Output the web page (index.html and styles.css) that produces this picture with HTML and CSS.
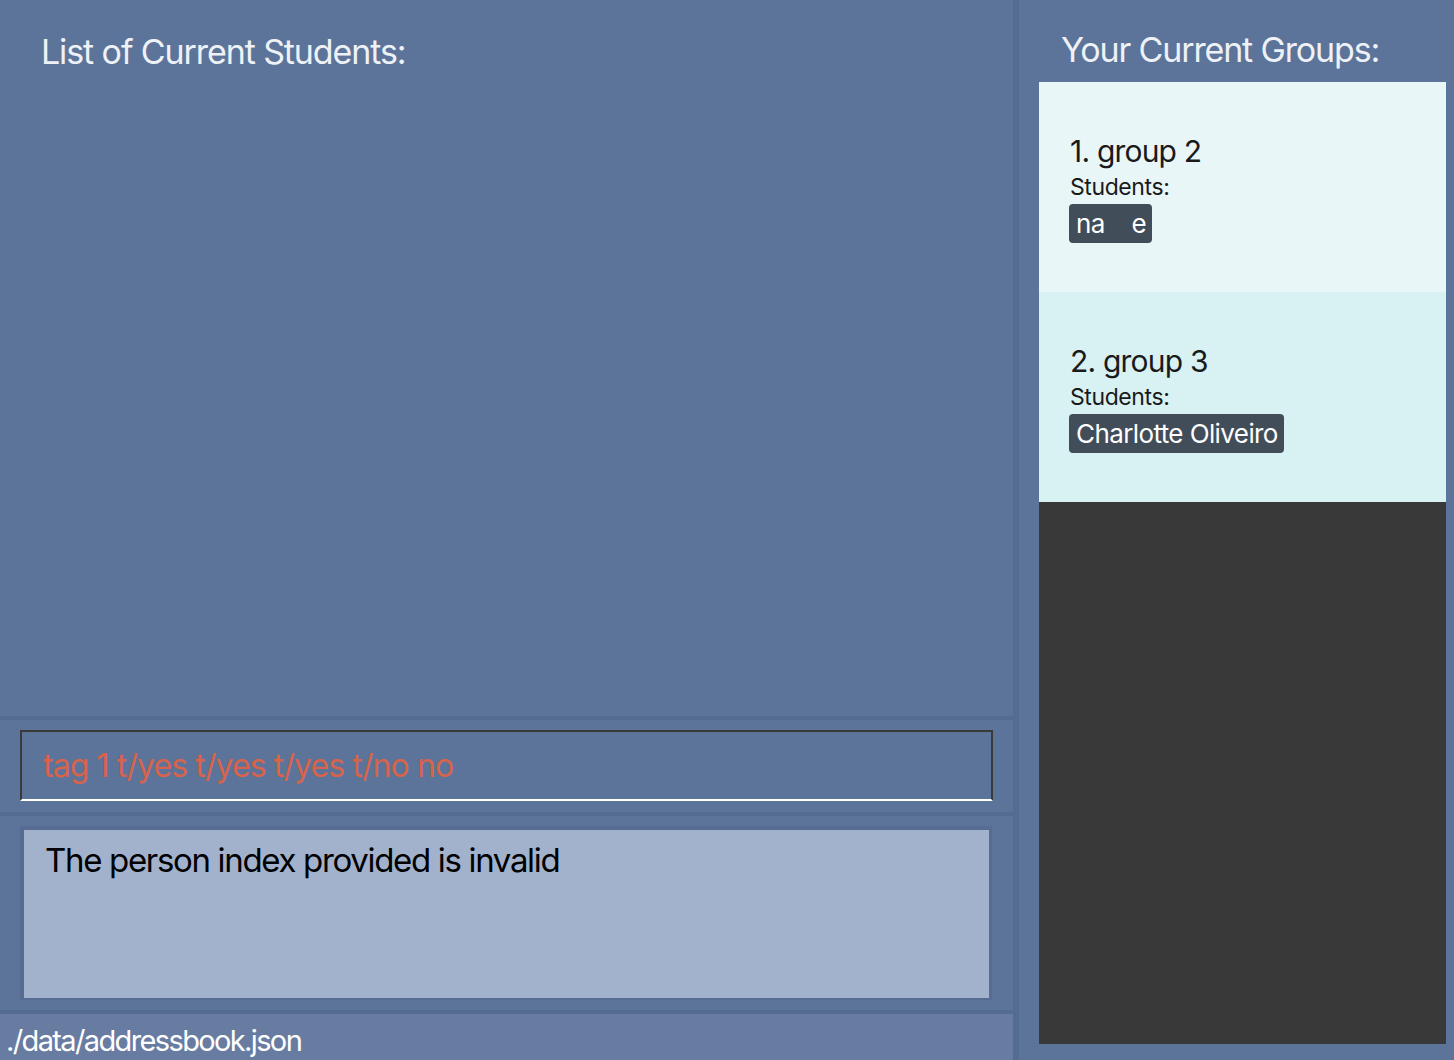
FILE: index.html
```html
<!DOCTYPE html>
<html>
<head>
<meta charset="utf-8">
<link rel="stylesheet" href="styles.css">
</head>
<body>
<div class="app">
  <div class="left">
    <section class="students">
      <h1 class="title">List of Current Students:</h1>
    </section>
    <section class="command">
      <div class="command-box">tag 1 t/yes t/yes t/yes t/no no</div>
    </section>
    <section class="result">
      <div class="result-box">The person index provided is invalid</div>
    </section>
    <footer class="status">./data/addressbook.json</footer>
  </div>
  <div class="divider"></div>
  <div class="right">
    <h2 class="groups-title">Your Current Groups:</h2>
    <div class="group-list">
      <div class="group-card odd">
        <div class="group-name">1. group 2</div>
        <div class="group-label">Students:</div>
        <div class="chips"><span class="chip">na&nbsp;&nbsp;&nbsp;&nbsp;e</span></div>
      </div>
      <div class="group-card even">
        <div class="group-name">2. group 3</div>
        <div class="group-label">Students:</div>
        <div class="chips"><span class="chip">Charlotte Oliveiro</span></div>
      </div>
    </div>
  </div>
</div>
</body>
</html>
```

FILE: styles.css
```css
html, body {
  margin: 0;
  padding: 0;
  width: 1454px;
  height: 1060px;
  overflow: hidden;
  background: #5c7499;
  font-family: Inter, "Noto Sans", sans-serif;
}

.app {
  display: flex;
  width: 1454px;
  height: 1060px;
}

.left {
  width: 1013px;
  display: flex;
  flex-direction: column;
  gap: 4px;
  background: #546b92;
}

.students {
  height: 716px;
  background: #5c7499;
  padding: 30px 0 0 41px;
  box-sizing: border-box;
}

.title {
  margin: 0;
  font-weight: 400;
  font-size: 34px;
  letter-spacing: -1.1px;
  line-height: 44px;
  color: #eef1f6;
}

.command {
  height: 92px;
  background: #5c7499;
  padding: 10px 20px 0 20px;
  box-sizing: border-box;
}

.command-box {
  height: 71px;
  box-sizing: border-box;
  border: 2px solid #3a3a3a;
  border-bottom: 2px solid #ffffff;
  padding: 0 0 0 21px;
  display: flex;
  align-items: center;
  font-size: 32px;
  letter-spacing: -0.9px;
  color: #d8634b;
}

.result {
  height: 194px;
  background: #5c7499;
  padding: 10px 21px 0 20px;
  box-sizing: border-box;
}

.result-box {
  height: 174px;
  box-sizing: border-box;
  border: 4px solid #566c93;
  border-right-width: 3px;
  border-bottom-width: 2px;
  background: #a2b2cc;
  padding: 8px 0 0 21px;
  font-size: 33px;
  letter-spacing: -1.33px;
  line-height: 44px;
  color: #000;
}

.status {
  flex: 1;
  margin-right: -2px;
  background: #687ca2;
  color: #ffffff;
  font-size: 29px;
  letter-spacing: -1.63px;
  padding: 8px 0 0 6px;
  box-sizing: border-box;
  line-height: 38px;
}

.divider {
  width: 6px;
  background: #546b92;
}

.right {
  flex: 1;
  display: flex;
  flex-direction: column;
  background: #5c7499;
  padding: 0 8px 16px 20px;
}

.groups-title {
  margin: 0;
  height: 82px;
  box-sizing: border-box;
  padding: 28px 0 0 22px;
  font-weight: 400;
  font-size: 34px;
  letter-spacing: -1.15px;
  line-height: 44px;
  color: #eef1f6;
}

.group-list {
  flex: 1;
  background: #393939;
  display: flex;
  flex-direction: column;
}

.group-card {
  height: 210px;
  box-sizing: border-box;
  padding: 50px 0 0 31px;
  color: #1a1a1a;
}

.group-card.odd { background: #e8f6f7; }
.group-card.even { background: #d8f2f3; }

.group-name {
  font-size: 30px;
  line-height: 38px;
  letter-spacing: -0.8px;
}

.group-label {
  font-size: 23px;
  line-height: 34px;
  letter-spacing: -0.4px;
}

.chips {
  display: flex;
  margin-left: -1px;
}

.chip {
  background: #414e5a;
  color: #ffffff;
  border-radius: 4px;
  padding: 0 6px 0 7px;
  font-size: 26px;
  line-height: 39px;
  letter-spacing: -0.6px;
  white-space: pre;
}
```
